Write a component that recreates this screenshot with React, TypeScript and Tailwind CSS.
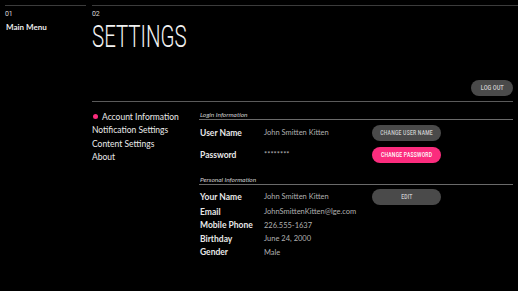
import React from 'react';

const sans = "font-['Lato','Open_Sans',sans-serif]";
const cond = "font-['Roboto','Liberation_Sans',sans-serif]";

function Pill({ label, pink = false }: { label: string; pink?: boolean }) {
  return (
    <div
      className={`flex h-[16px] w-[69px] items-center justify-center rounded-full ${
        pink ? 'bg-[#fb2c7d] text-white' : 'bg-[#4a4a4a] text-[#cfcfcf]'
      }`}
    >
      <span className={`${cond} inline-block scale-x-[0.72] whitespace-nowrap text-[7px] font-medium leading-none tracking-[0.3px]`}>
        {label}
      </span>
    </div>
  );
}

function SectionTitle({ title }: { title: string }) {
  return (
    <>
      <p className="h-[8px] pl-[1px] text-[6.5px] italic leading-[8px] text-[#d0d0d0]">{title}</p>
      <div className="h-px bg-[#6a6a6a]" />
    </>
  );
}

function Row({ label, value, height, children }: { label: string; value: string; height: string; children?: React.ReactNode }) {
  return (
    <div className={`flex items-center pl-[1px] leading-none ${height}`}>
      <p className="w-[64px] text-[8.5px] font-bold text-[#e8e8e8]">{label}</p>
      <p className="w-[108px] text-[7.5px] text-[#b0b0b0]">{value}</p>
      {children}
    </div>
  );
}

export default function App() {
  const nav = ['Account Information', 'Notification Settings', 'Content Settings', 'About'];

  return (
    <div className={`${sans} flex h-[291px] w-[518px] overflow-hidden bg-black leading-none`}>
      {/* main menu column */}
      <div className="ml-[5px] w-[81px] pt-[5px]">
        <div className="h-px bg-[#3c3c3c]" />
        <p className={`${cond} mt-[4px] text-[7px] leading-[8px] tracking-[-0.3px] text-[#d8d8d8]`}>01</p>
        <p className="mt-[4px] pl-[1px] text-[8px] font-bold leading-[10px] text-[#ececec]">Main Menu</p>
      </div>

      {/* settings column */}
      <div className="ml-[6px] flex-1 pt-[5px]">
        <div className="h-px bg-[#3c3c3c]" />
        <p className={`${cond} mt-[4px] text-[7px] leading-[8px] tracking-[-0.3px] text-[#d8d8d8]`}>02</p>
        <h1 className={`${cond} mt-[3px] block h-[31px] w-fit origin-left scale-x-[0.66] whitespace-nowrap text-[31px] font-light leading-[31px] text-[#f2f2f2]`}>
          SETTINGS
        </h1>

        <div className="pr-[5px]">
          <div className="mt-[28px] flex justify-end">
            <div className="flex h-[16px] w-[42px] items-center justify-center rounded-full bg-[#4a4a4a]">
              <span className={`${cond} inline-block scale-x-[0.75] text-[7.5px] font-medium leading-none text-[#cfcfcf]`}>LOG OUT</span>
            </div>
          </div>
          <div className="mt-[5px] h-px bg-[#5a5a5a]" />

          <div className="flex">
            <nav className="mt-[8px] w-[107px]">
              {nav.map((item, i) => (
                <div key={item} className="flex h-[13.6px] items-center gap-[4px]">
                  {i === 0 && <span className="ml-[1px] h-[5px] w-[5px] rounded-full bg-[#fb2c7d]" />}
                  <span className="text-[8.5px] text-[#ebebeb]">{item}</span>
                </div>
              ))}
            </nav>

            <div className="flex-1">
              <div className="mt-[9px]">
                <SectionTitle title="Login Information" />
              </div>
              <div className="mt-[5px]">
                <Row label="User Name" value="John Smitten Kitten" height="h-[16px]">
                  <Pill label="CHANGE USER NAME" />
                </Row>
                <Row label="Password" value="********" height="mt-[6px] h-[16px]">
                  <Pill label="CHANGE PASSWORD" pink />
                </Row>
              </div>

              <div className="mt-[13px]">
                <SectionTitle title="Personal Information" />
              </div>
              <div className="mt-[4px]">
                <Row label="Your Name" value="John Smitten Kitten" height="h-[16px]">
                  <Pill label="EDIT" />
                </Row>
                <Row label="Email" value="JohnSmittenKitten@lge.com" height="h-[13.5px]" />
                <Row label="Mobile Phone" value="226.555-1637" height="h-[13.5px]" />
                <Row label="Birthday" value="June 24, 2000" height="h-[13.5px]" />
                <Row label="Gender" value="Male" height="h-[13.5px]" />
              </div>
            </div>
          </div>
        </div>
      </div>
    </div>
  );
}
